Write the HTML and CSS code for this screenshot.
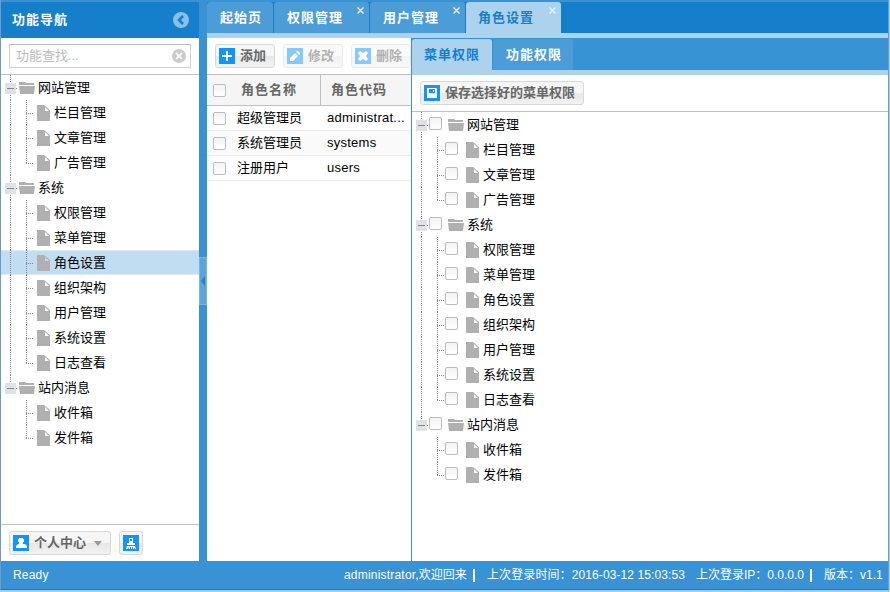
FILE: index.html
```html
<!DOCTYPE html>
<html lang="zh-CN">
<head>
<meta charset="utf-8">
<title>角色设置</title>
<link rel="stylesheet" href="styles.css">
</head>
<body>
<svg width="0" height="0" class="defs">
  <symbol id="folder" viewBox="0 0 16 12"><path fill="#b0b0b0" d="M0 0h6l1 1h8v2H0zM0 4h16l-1 8H1z"/></symbol>
  <symbol id="file" viewBox="0 0 13 16"><path fill="#b0b0b0" d="M0 0h7v6h6v10H0z"/><path fill="#b0b0b0" d="M7 0l6 5v1h-1L8 2v4H7z"/></symbol>
</svg>
<div class="app">
  <div class="workspace">
    <aside class="nav">
      <header class="nav-head"><span>功能导航</span>
        <svg class="collapse" viewBox="0 0 16 16"><circle cx="8" cy="8" r="8" fill="#8abfe6"/><path d="M10 4L6 8l4 4" fill="none" stroke="#157fcc" stroke-width="2.6"/></svg>
      </header>
      <div class="search"><div class="field"><span>功能查找...</span>
        <svg width="14" height="14" viewBox="0 0 14 14"><circle cx="7" cy="7" r="7" fill="#cbcbcb"/><path d="M4 4l6 6M10 4l-6 6" stroke="#fff" stroke-width="1.6"/></svg></div></div>
      <div class="tree" id="nav-tree"></div>
      <footer class="nav-foot">
        <div class="btn user"><svg class="ic" viewBox="0 0 16 16"><rect width="16" height="16" fill="#0f95fb"/><path fill="#fff" d="M6 3h4v1h1v3h-1v2h2l2 2v2H3v-2l2-2h1V7H5V4h1z"/></svg><span>个人中心</span><i class="caret"></i></div>
        <div class="btn"><svg class="ic" viewBox="0 0 16 16"><rect width="16" height="16" fill="#0f95fb"/><path fill="#fff" d="M6 3h4v5h2v2H4V8h2zM7 4v2h2V4zM4 11h8l1 3h-1l-1-2v2h-1v-2H9v2H8v-2H7v2H6v-2l-1 2H3z" fill-rule="evenodd"/></svg></div>
      </footer>
    </aside>
    <div class="splitter"><div class="handle"><i></i></div></div>
    <main class="main">
      <nav class="tabs">
        <div class="tab home">起始页</div>
        <div class="tab">权限管理<svg class="x" viewBox="0 0 7 7"><path d="M.5.5l6 6M6.5.5l-6 6"/></svg></div>
        <div class="tab">用户管理<svg class="x" viewBox="0 0 7 7"><path d="M.5.5l6 6M6.5.5l-6 6"/></svg></div>
        <div class="tab active">角色设置<svg class="x" viewBox="0 0 7 7"><path d="M.5.5l6 6M6.5.5l-6 6"/></svg></div>
      </nav>
      <div class="panes">
        <section class="roles">
          <div class="toolbar">
            <div class="btn"><svg class="ic" viewBox="0 0 16 16"><rect width="16" height="16" fill="#0f95fb"/><path fill="#fff" d="M7 3h2v4h4v2H9v4H7V9H3V7h4z"/></svg><span>添加</span></div>
            <div class="btn off"><svg class="ic" viewBox="0 0 16 16"><rect width="16" height="16" fill="#0f95fb"/><path fill="#fff" d="M3 13v-3l5-5 3 3-5 5zM9 4l1-1h1l2 2v1l-1 1z"/></svg><span>修改</span></div>
            <div class="btn off"><svg class="ic" viewBox="0 0 16 16"><rect width="16" height="16" fill="#0f95fb"/><path fill="#fff" d="M3 5l2-2 3 2 3-2 2 2-2 3 2 3-2 2-3-2-3 2-2-2 2-3z"/></svg><span>删除</span></div>
          </div>
          <div class="row head"><i class="check"></i><b>角色名称</b><b class="code">角色代码</b></div>
          <div class="row"><i class="check"></i><span>超级管理员</span><span class="code">administrat...</span></div>
          <div class="row alt"><i class="check"></i><span>系统管理员</span><span class="code">systems</span></div>
          <div class="row"><i class="check"></i><span>注册用户</span><span class="code">users</span></div>
        </section>
        <section class="rights">
          <nav class="tabs sub"><div class="tab active">菜单权限</div><div class="tab">功能权限</div></nav>
          <div class="toolbar"><div class="btn"><svg class="ic" viewBox="0 0 16 16"><rect width="16" height="16" fill="#0f95fb"/><path fill="#fff" fill-rule="evenodd" d="M3 3h9l1 1v9H3zM5 4v4h6V4zM9 5h1v2H9z"/></svg><span>保存选择好的菜单权限</span></div></div>
          <div class="tree checks" id="rights-tree"></div>
        </section>
      </div>
    </main>
  </div>
  <footer class="status"><span class="ready">Ready</span><span class="who"><span class="login">administrator,</span>欢迎回来</span><i></i><span class="time">上次登录时间：2016-03-12 15:03:53</span><span class="ip">上次登录IP：0.0.0.0</span><i></i><span class="version">版本：v1.1</span></footer>
</div>
<script src="tree.js"></script>
</body>
</html>
```
FILE: styles.css
```css
* { box-sizing: border-box; }
body { margin: 0; height: 592px; overflow: hidden; background: #a9cbeb; font: 13px/24px "Liberation Sans", "Noto Sans CJK SC", sans-serif; color: #000; }
svg { display: block; flex: none; }
.defs { position: absolute; }
.app { width: 889px; height: 590px; display: flex; flex-direction: column; background: #3892d3; border: solid #6f9bc6; border-width: 0 1px 1px; border-bottom-color: #2b75ac; padding-top: 2px; }
.workspace { display: flex; height: 559px; flex: none; }
.nav { width: 198px; display: flex; flex-direction: column; background: #fff; }
.nav-head { height: 36px; padding: 0 10px 0 11px; display: flex; align-items: center; justify-content: space-between; background: #157fcc; color: #fff; font-weight: bold; letter-spacing: 1px; }
.collapse { width: 16px; height: 16px; }
.search { height: 37px; padding: 6px 8px; border-bottom: 1px solid #c0c0c0; }
.field { height: 24px; border: 1px solid #d0d0d0; border-top-color: #bdbdbd; padding: 0 4px 0 6px; display: flex; align-items: center; justify-content: space-between; color: #bbb; }
.tree { flex: 1; }
.node { height: 25px; display: flex; align-items: flex-start; white-space: nowrap; line-height: 25px; }
.node.selected { background: #c1ddf1; box-shadow: inset 0 1px #d9ebf7, inset 0 -1px #d9ebf7; }
.guide { width: 16px; height: 25px; flex: none; margin-left: 1px; background: repeating-linear-gradient(#888 0 1px, transparent 1px 2px) 8px 0 / 1px 25px no-repeat; }
.guide.join { background: repeating-linear-gradient(#888 0 1px, transparent 1px 2px) 8px 0 / 1px 25px no-repeat, repeating-linear-gradient(90deg, #888 0 1px, transparent 1px 2px) 8px 13px / 7px 1px no-repeat; }
.guide.end { background-size: 1px 13px, 7px 1px; }
.guide.blank { background: none; }
.guide + .guide { margin-left: 0; }
.toggle { display: block; width: 11px; height: 11px; margin: 8px 0 0 3px; background: linear-gradient(#888, #888) 2px 5px / 7px 1px no-repeat #dee1e5; }
.folder { width: 16px; height: 12px; margin: 7px 3px 0 1px; }
.file { width: 13px; height: 16px; margin: 5px 4px 0 3px; }
.check { width: 13px; height: 13px; flex: none; border: 1px solid #bcbcbc; border-radius: 2px; background: linear-gradient(#f3f3f3, #fff); }
.tree .check { margin-top: 5px; }
.checks .folder { margin-left: 6px; }
.checks .file { margin-left: 8px; }
.nav-foot { height: 37px; border-top: 1px solid #c0c0c0; padding: 6px 8px; display: flex; gap: 8px; }
.btn { height: 24px; display: flex; align-items: center; gap: 5px; padding: 0 8px 0 3px; border: 1px solid #d8d8d8; border-radius: 3px; background: linear-gradient(#f6f6f6 48%, #e8e8e8 52%, #f2f2f2); color: #666; font-weight: bold; line-height: 22px; white-space: nowrap; }
.btn .ic { width: 16px; height: 16px; }
.nav-foot .btn { padding: 0 3px; }
.nav-foot .user { width: 102px; }
.caret { margin-left: 3px; border: solid transparent; border-width: 5px 4px 0; border-top-color: #999; }
.off { opacity: .5; }
.splitter { width: 8px; padding-top: 255px; }
.handle { height: 48px; border: 1px solid #78b5e2; background: #5ba5db; display: flex; align-items: center; }
.handle i { border: solid transparent; border-width: 5px 4px 5px 0; border-right-color: #2183cb; margin-left: 1px; }
.main { flex: 1; min-width: 0; display: flex; flex-direction: column; background: #fff; }
.tabs { height: 36px; display: flex; gap: 1px; background: #157fcc; border-bottom: 5px solid #add2ed; }
.tab { position: relative; width: 95px; padding-left: 13px; background: #4b9cd7; color: #fff; font-weight: bold; letter-spacing: 1px; line-height: 32px; border-radius: 3px 3px 0 0; white-space: nowrap; }
.home { width: 66px; }
.tab.active { background: #add2ed; color: #157fcc; padding-left: 12px; }
.x { position: absolute; top: 5px; right: 5px; width: 7px; height: 7px; }
.x path { stroke: #e8f3fb; stroke-width: 1.4; fill: none; }
.panes { display: flex; flex: 1; min-height: 0; }
.roles { width: 205px; flex: none; overflow: hidden; border-right: 1px solid #3892d3; }
.toolbar { height: 37px; padding: 6px 8px; display: flex; gap: 8px; border-bottom: 1px solid #c0c0c0; }
.roles .btn { width: 60px; flex: none; }
.row { display: flex; align-items: center; height: 25px; padding-left: 6px; border-bottom: 1px solid #ededed; line-height: 24px; }
.row > :nth-child(2) { width: 84px; margin-left: 11px; flex: none; }
.row .code { padding-left: 6px; white-space: nowrap; letter-spacing: .25px; }
.row.head { height: 31px; background: #f5f5f5; border-color: #c0c0c0; color: #666; letter-spacing: 1px; line-height: 30px; }
.row.head b:nth-child(2) { width: 79px; margin-left: 15px; }
.row.head .code { border-left: 1px solid #c0c0c0; padding-left: 10px; letter-spacing: 1px; }
.alt { background: #fafafa; }
.rights { flex: 1; min-width: 0; }
.sub { height: 37px; padding-top: 1px; background: #3892d3; }
.sub .tab { width: 80px; }
.status { flex: 1; display: flex; align-items: center; padding: 0 5px 0 12px; color: #fff; font-size: 12px; white-space: nowrap; }
.ready { width: 331px; letter-spacing: .2px; }
.login { letter-spacing: .2px; }
.status i { width: 2px; height: 13px; background: #fff; }
.who { width: 129px; }
.time { margin-left: 12px; width: 209px; letter-spacing: .1px; }
.ip { width: 114px; }
.version { margin-left: 12px; }
```
FILE: tree.js
```js
const menu = [
  ["网站管理", ["栏目管理", "文章管理", "广告管理"]],
  ["系统", ["权限管理", "菜单管理", "角色设置", "组织架构", "用户管理", "系统设置", "日志查看"]],
  ["站内消息", ["收件箱", "发件箱"]]
];

function render(id, checks, selected) {
  const box = checks ? '<i class="check"></i>' : '';
  let html = '';
  menu.forEach(([name, items], g) => {
    const last = g === menu.length - 1;
    html += `<div class="node"><div class="guide join${last ? ' end' : ''}"><i class="toggle"></i></div>${box}<svg class="folder"><use href="#folder"/></svg><span>${name}</span></div>`;
    items.forEach((item, i) => {
      html += `<div class="node${item === selected ? ' selected' : ''}"><div class="guide${last ? ' blank' : ''}"></div><div class="guide join${i === items.length - 1 ? ' end' : ''}"></div>${box}<svg class="file"><use href="#file"/></svg><span>${item}</span></div>`;
    });
  });
  document.getElementById(id).innerHTML = html;
}

render('nav-tree', false, '角色设置');
render('rights-tree', true);
```
